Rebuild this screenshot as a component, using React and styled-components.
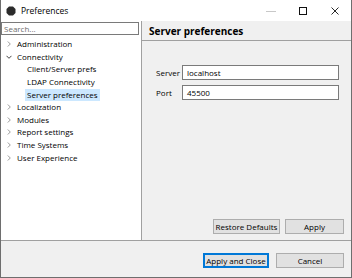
import React from 'react';
import styled, { createGlobalStyle } from 'styled-components';

const Global = createGlobalStyle`
  html, body {
    margin: 0;
    padding: 0;
    background: #fff;
  }
  * { box-sizing: border-box; }
`

const Window = styled.div`
  width: 352px;
  height: 278px;
  display: flex;
  flex-direction: column;
  border: 1px solid #6e6e6e;
  border-top: none;
  background: #f0f0f0;
  font-family: "Segoe UI", "Open Sans", "Noto Sans", sans-serif;
  font-size: 8px;
  color: #000;
  white-space: nowrap;
  overflow: hidden;
`

const TitleBar = styled.div`
  height: 21px;
  flex: none;
  display: flex;
  align-items: center;
  background: #fff;
  padding-left: 5px;
`

const Title = styled.span`
  margin-left: 5px;
  font-size: 8.5px;
  flex: 1;
`

const WinButton = styled.div`
  width: 32px;
  height: 21px;
  display: flex;
  align-items: center;
  justify-content: center;
`

const Main = styled.div`
  height: 220px;
  flex: none;
  display: flex;
  border-bottom: 1px solid #a0a0a0;
`

const LeftPane = styled.div`
  width: 141px;
  flex: none;
  background: #fff;
  border-right: 1px solid #a0a0a0;
  padding-top: 1px;
`

const Search = styled.div`
  width: 138px;
  height: 13px;
  border: 1px solid #7a7a7a;
  color: #6d6d6d;
  padding-left: 2px;
  line-height: 11px;
`

const Tree = styled.div`
  padding-top: 3px;
`

const Row = styled.div`
  height: 12.6px;
  display: flex;
  align-items: center;
  padding-left: ${p => (p.$child ? '24px' : '2px')};
`

const Arrow = styled.span`
  width: 12px;
  display: flex;
  align-items: center;
  justify-content: center;
  color: #8a8a8a;
`

const Label = styled.span`
  padding: 0 2px;
  height: 12px;
  line-height: 12px;
  background: ${p => (p.$selected ? '#cce8ff' : 'transparent')};
`

const RightPane = styled.div`
  flex: 1;
  display: flex;
  flex-direction: column;
`

const Header = styled.div`
  height: 20px;
  flex: none;
  display: flex;
  align-items: center;
  padding-left: 7px;
  font-weight: bold;
  font-size: 10px;
  border-bottom: 1px solid #a0a0a0;
`

const Form = styled.div`
  flex: 1;
  display: grid;
  grid-template-columns: 26px 1fr;
  grid-auto-rows: 15px;
  row-gap: 5px;
  align-content: start;
  align-items: center;
  padding: 24px 12px 0 14px;
`

const Field = styled.div`
  height: 15px;
  border: 1px solid #7a7a7a;
  background: #fff;
  padding-left: 4px;
  line-height: 13px;
`

const ButtonRow = styled.div`
  display: flex;
  justify-content: flex-end;
  gap: ${p => p.$gap || 5}px;
  padding: ${p => p.$pad};
`

const Button = styled.div`
  width: ${p => p.$w}px;
  height: 15px;
  display: flex;
  align-items: center;
  justify-content: center;
  background: #e1e1e1;
  border: 1px solid ${p => (p.$default ? '#0078d7' : '#adadad')};
  box-shadow: ${p => (p.$default ? 'inset 0 0 0 1px #0078d7' : 'none')};
`

const Footer = styled.div`
  flex: 1;
`

const items = [
  { label: 'Administration', arrow: 'closed' },
  { label: 'Connectivity', arrow: 'open' },
  { label: 'Client/Server prefs', child: true },
  { label: 'LDAP Connectivity', child: true },
  { label: 'Server preferences', child: true, selected: true },
  { label: 'Localization', arrow: 'closed' },
  { label: 'Modules', arrow: 'closed' },
  { label: 'Report settings', arrow: 'closed' },
  { label: 'Time Systems', arrow: 'closed' },
  { label: 'User Experience', arrow: 'closed' },
]

const Chevron = ({ open }) => (
  <svg width="6" height="6" viewBox="0 0 6 6">
    {open
      ? <path d="M0.5 1.8 L3 4.3 L5.5 1.8" fill="none" stroke="#444" strokeWidth="1" />
      : <path d="M1.8 0.5 L4.3 3 L1.8 5.5" fill="none" stroke="#9a9a9a" strokeWidth="1" />}
  </svg>
)

const App = () => {
  return (
    <>
      <Global />
      <Window>
        <TitleBar>
          <svg width="10" height="10" viewBox="0 0 10 10">
            <path d="M3 0.5 L7 0.5 L9.5 3 L9.5 7 L7 9.5 L3 9.5 L0.5 7 L0.5 3 Z" fill="#2b2b2b" />
          </svg>
          <Title>Preferences</Title>
          <WinButton>
            <svg width="10" height="10" viewBox="0 0 10 10">
              <path d="M0 5.5 H10" stroke="#c8c8c8" strokeWidth="1" />
            </svg>
          </WinButton>
          <WinButton>
            <svg width="10" height="10" viewBox="0 0 10 10">
              <rect x="1.5" y="1.5" width="7" height="7" fill="none" stroke="#111" strokeWidth="1" />
            </svg>
          </WinButton>
          <WinButton>
            <svg width="10" height="10" viewBox="0 0 10 10">
              <path d="M1.5 1.5 L8.5 8.5 M8.5 1.5 L1.5 8.5" stroke="#111" strokeWidth="0.9" />
            </svg>
          </WinButton>
        </TitleBar>
        <Main>
          <LeftPane>
            <Search>Search...</Search>
            <Tree>
              {items.map(it => (
                <Row key={it.label} $child={it.child}>
                  {!it.child && (
                    <Arrow><Chevron open={it.arrow === 'open'} /></Arrow>
                  )}
                  <Label $selected={it.selected}>{it.label}</Label>
                </Row>
              ))}
            </Tree>
          </LeftPane>
          <RightPane>
            <Header>Server preferences</Header>
            <Form>
              <span>Server</span>
              <Field>localhost</Field>
              <span>Port</span>
              <Field>45500</Field>
            </Form>
            <ButtonRow $pad="0 7px 6px 0" $gap={5}>
              <Button $w={67}>Restore Defaults</Button>
              <Button $w={59}>Apply</Button>
            </ButtonRow>
          </RightPane>
        </Main>
        <Footer>
          <ButtonRow $pad="12px 7px 0 0" $gap={7}>
            <Button $w={66} $default>Apply and Close</Button>
            <Button $w={68}>Cancel</Button>
          </ButtonRow>
        </Footer>
      </Window>
    </>
  )
}

export default App;
